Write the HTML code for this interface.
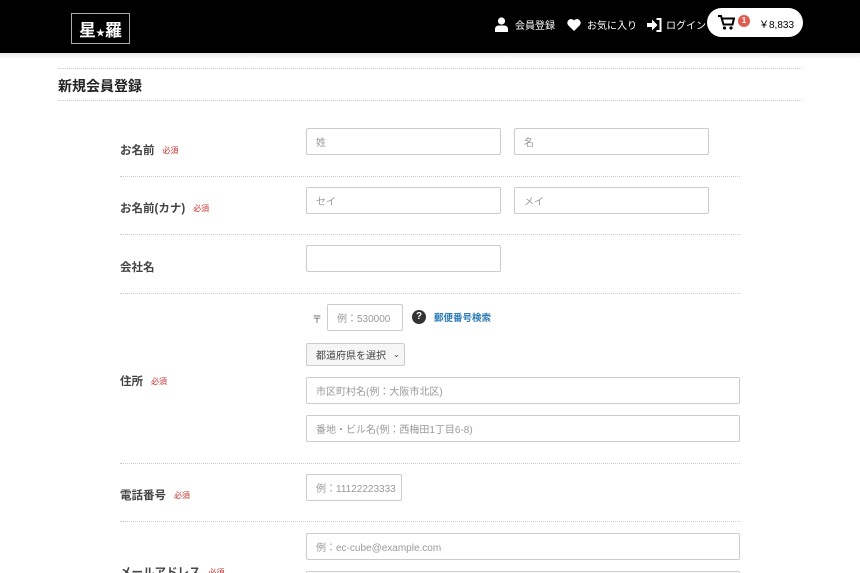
<!DOCTYPE html><html><head><meta charset="utf-8"><style>
*{margin:0;padding:0;box-sizing:border-box}
html,body{width:860px;height:573px;overflow:hidden}
body{background:#fff;font-family:"Liberation Sans","Noto Sans CJK JP",sans-serif;position:relative;color:#333}
.a{position:absolute}
.hd{left:0;top:0;width:860px;height:53px;background:#000}
.sh{left:0;top:53px;width:860px;height:6px;background:linear-gradient(#e8e8e8,#fff)}
.hr{height:0;border-top:1px dotted #ccc}
.in{border:1px solid #ccc;border-radius:2px;background:#fff;font-size:10px;color:#999;padding-left:9px;display:flex;align-items:center}
.lb{font-size:11.5px;font-weight:bold;color:#444}
.rq{font-size:8px;color:#c9302c;font-weight:normal;margin-left:8px;vertical-align:1px}
.nav{color:#fff;font-size:10px;display:flex;align-items:center}
</style></head><body>
<div class="a hd"></div><div class="a sh"></div>
<div class="a" style="left:71px;top:13px;width:59px;height:31px;border:1px solid #aaa;color:#fff;font-size:17px;font-weight:bold;text-align:center;line-height:29px;white-space:nowrap;overflow:hidden;font-family:'Noto Sans CJK JP',sans-serif">星<span style="font-size:9px">★</span>羅</div>
<div class="a nav" style="left:495px;top:17px"><svg width="13" height="15" viewBox="0 0 13 15"><circle cx="6.5" cy="4" r="3.6" fill="#fff"/><path d="M0 15v-2.5q0-4 4-4h5q4 0 4 4V15z" fill="#fff"/></svg><span style="margin-left:7px">会員登録</span></div>
<div class="a nav" style="left:567px;top:17px"><svg width="14" height="13" viewBox="0 0 14 13"><path d="M7 13L1.2 7.3A3.6 3.6 0 0 1 7 2.4a3.6 3.6 0 0 1 5.8 4.9z" fill="#fff"/></svg><span style="margin-left:6px">お気に入り</span></div>
<div class="a nav" style="left:647px;top:17px"><svg width="15" height="14" viewBox="0 0 15 14"><path d="M0 5h5V1.5L10.5 7 5 12.5V9H0z" fill="#fff"/><path d="M9.5 1h4v12h-4" stroke="#fff" stroke-width="2" fill="none"/></svg><span style="margin-left:4px">ログイン</span></div>
<div class="a" style="left:707px;top:8px;width:96px;height:29px;background:#fff;border-radius:15px"></div>
<svg class="a" style="left:718px;top:15px" width="17" height="15" viewBox="0 0 17 15"><path d="M0 1h3l2.5 8.5h9L16 3.5H4.2" stroke="#000" stroke-width="2" fill="none"/><circle cx="6.5" cy="13" r="1.6"/><circle cx="13" cy="13" r="1.6"/></svg>
<div class="a" style="left:738px;top:15px;width:12px;height:12px;border-radius:50%;background:#de5d50;color:#fff;font-size:8px;text-align:center;line-height:12px;font-weight:bold">1</div>
<div class="a" style="left:759px;top:16px;font-size:10px;color:#000">￥8,833</div>
<div class="a hr" style="left:58px;top:68px;width:744px"></div>
<div class="a" style="left:58px;top:76px;font-size:14px;font-weight:bold;color:#222">新規会員登録</div>
<div class="a hr" style="left:58px;top:100px;width:744px"></div>
<div class="a lb" style="left:120px;top:142px">お名前<span class="rq">必須</span></div>
<div class="a in" style="left:306px;top:128px;width:195px;height:27px">姓</div>
<div class="a in" style="left:514px;top:128px;width:195px;height:27px">名</div>
<div class="a hr" style="left:120px;top:176px;width:620px"></div>
<div class="a lb" style="left:120px;top:200px">お名前(カナ)<span class="rq">必須</span></div>
<div class="a in" style="left:306px;top:187px;width:195px;height:27px">セイ</div>
<div class="a in" style="left:514px;top:187px;width:195px;height:27px">メイ</div>
<div class="a hr" style="left:120px;top:234px;width:620px"></div>
<div class="a lb" style="left:120px;top:259px">会社名</div>
<div class="a in" style="left:306px;top:245px;width:195px;height:27px"></div>
<div class="a hr" style="left:120px;top:293px;width:620px"></div>
<div class="a" style="left:312px;top:311px;font-size:10px;color:#666">〒</div>
<div class="a in" style="left:327px;top:304px;width:76px;height:27px">例：530000</div>
<div class="a" style="left:412px;top:310px;width:14px;height:14px;border-radius:50%;background:#333;color:#fff;font-size:10px;font-weight:bold;text-align:center;line-height:14px">?</div>
<div class="a" style="left:434px;top:310px;font-size:9.5px;color:#2a7bb8;font-weight:bold">郵便番号検索</div>
<div class="a in" style="left:306px;top:343px;width:99px;height:23px;color:#444;background:#f6f6f6">都道府県を選択 <span style="margin-left:7px;font-size:8px">⌄</span></div>
<div class="a lb" style="left:120px;top:373px">住所<span class="rq">必須</span></div>
<div class="a in" style="left:306px;top:377px;width:434px;height:27px">市区町村名(例：大阪市北区)</div>
<div class="a in" style="left:306px;top:415px;width:434px;height:27px">番地・ビル名(例：西梅田1丁目6-8)</div>
<div class="a hr" style="left:120px;top:463px;width:620px"></div>
<div class="a lb" style="left:120px;top:487px">電話番号<span class="rq">必須</span></div>
<div class="a in" style="left:306px;top:474px;width:96px;height:27px;overflow:hidden;white-space:nowrap">例：11122223333</div>
<div class="a hr" style="left:120px;top:521px;width:620px"></div>
<div class="a in" style="left:306px;top:533px;width:434px;height:27px">例：ec-cube@example.com</div>
<div class="a in" style="left:306px;top:571px;width:434px;height:27px"></div>
<div class="a lb" style="left:120px;top:564px">メールアドレス<span class="rq">必須</span></div>
</body></html>
